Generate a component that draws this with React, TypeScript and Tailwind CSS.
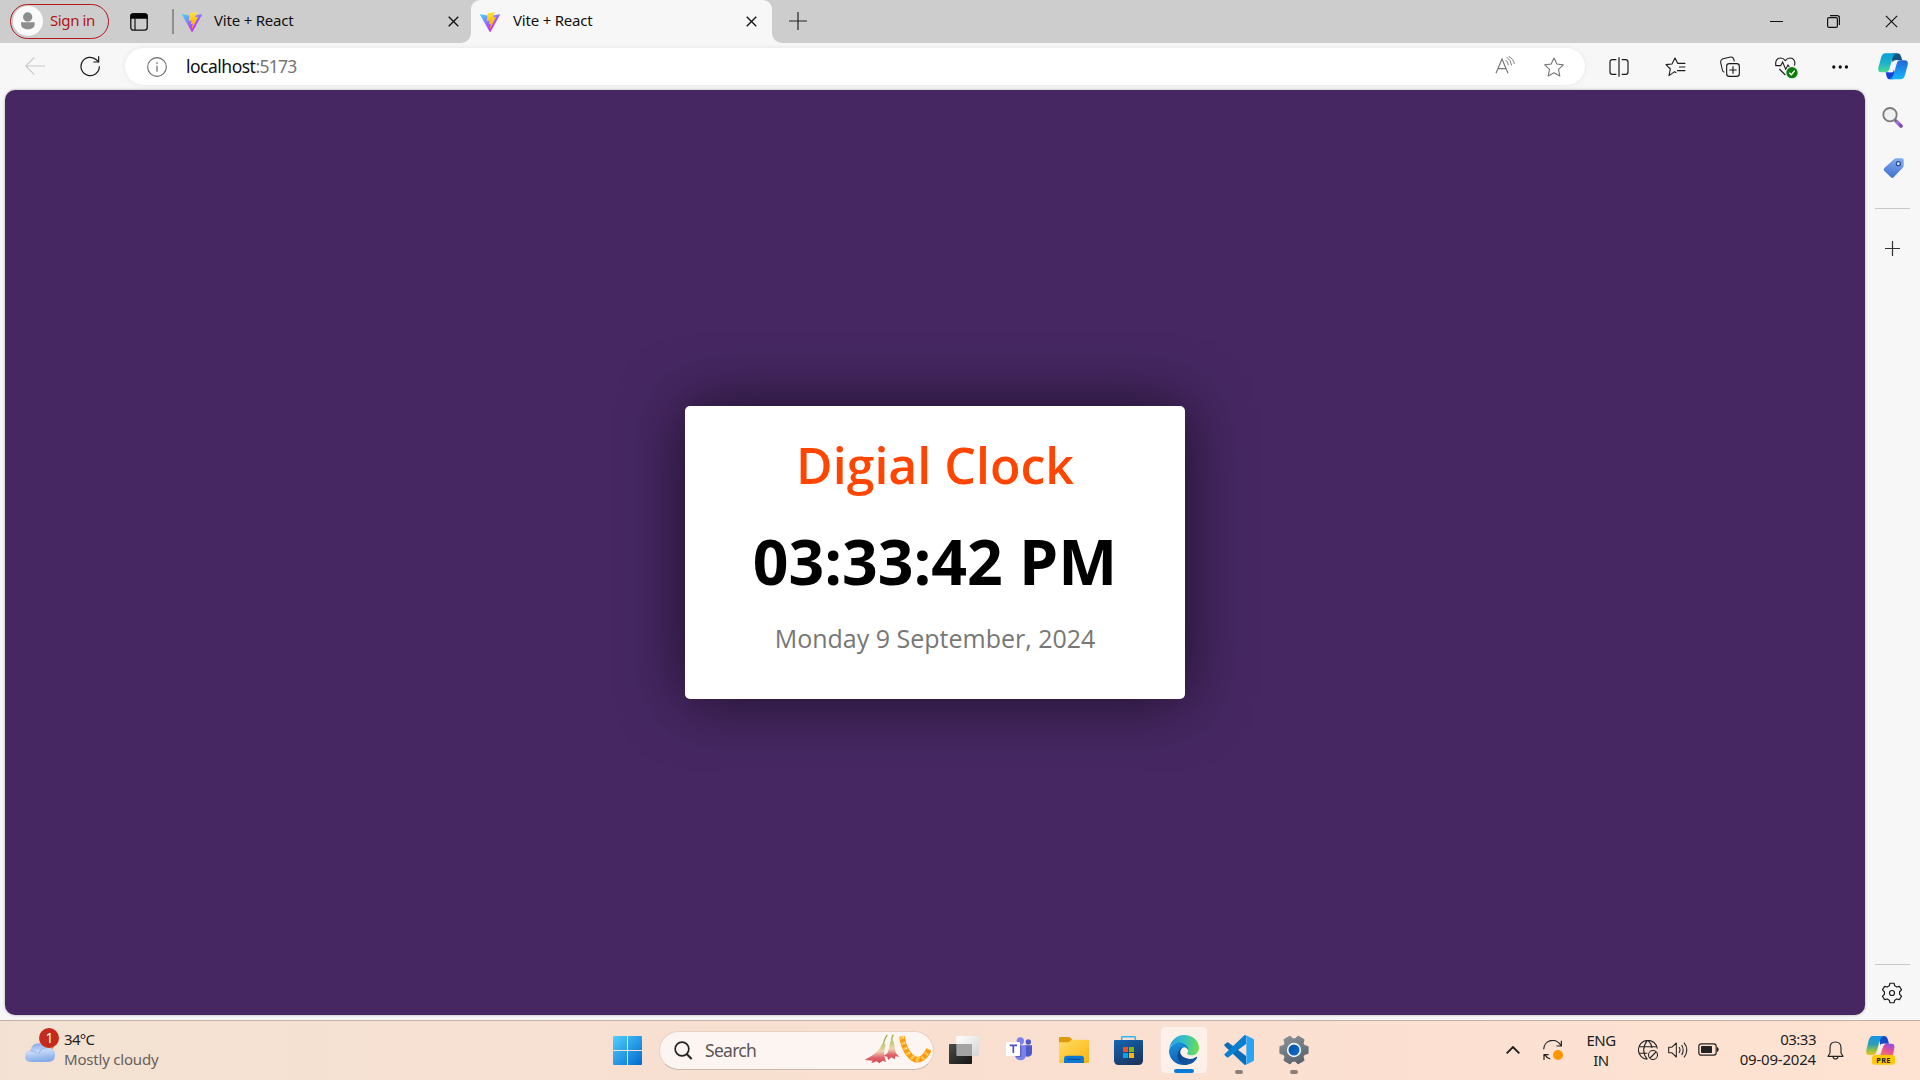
import type { ReactNode } from "react";

type IconProps = { w: number; h: number; vb: string; className?: string; children: ReactNode };

function Icon({ w, h, vb, className = "", children }: IconProps) {
  return (
    <svg width={w} height={h} viewBox={vb} fill="none" className={`block shrink-0 ${className}`}>
      {children}
    </svg>
  );
}

function gearPath(cx: number, cy: number, outer: number, inner: number, offset: number, tip: number, base: number) {
  const pts: string[] = [];
  for (let i = 0; i < 6; i++) {
    const a = offset + i * 60;
    for (const [r, d] of [[inner, -base], [outer, -tip], [outer, tip], [inner, base]]) {
      const rad = ((a + d) * Math.PI) / 180;
      pts.push(`${(cx + r * Math.cos(rad)).toFixed(1)} ${(cy + r * Math.sin(rad)).toFixed(1)}`);
    }
  }
  return `M${pts.join("L")}Z`;
}

function ViteLogo({ id }: { id: string }) {
  return (
    <Icon w={20} h={20} vb="0 0 256 257">
      <defs>
        <linearGradient id={`${id}a`} x1="-.828%" x2="57.636%" y1="7.652%" y2="78.411%">
          <stop offset="0%" stopColor="#41D1FF" />
          <stop offset="100%" stopColor="#BD34FE" />
        </linearGradient>
        <linearGradient id={`${id}b`} x1="43.376%" x2="50.316%" y1="2.242%" y2="89.03%">
          <stop offset="0%" stopColor="#FFEA83" />
          <stop offset="8.333%" stopColor="#FFDD35" />
          <stop offset="100%" stopColor="#FFA800" />
        </linearGradient>
      </defs>
      <path
        fill={`url(#${id}a)`}
        d="M255.153 37.938L134.897 252.976c-2.483 4.44-8.862 4.466-11.382.048L.875 37.958c-2.746-4.814 1.371-10.646 6.827-9.67l120.385 21.517a6.537 6.537 0 0 0 2.322-.004l117.867-21.483c5.438-.991 9.574 4.796 6.877 9.62Z"
      />
      <path
        fill={`url(#${id}b)`}
        d="M185.432.063L96.44 17.501a3.268 3.268 0 0 0-2.634 3.014l-5.474 92.456a3.268 3.268 0 0 0 3.997 3.378l24.777-5.718c2.318-.535 4.413 1.507 3.936 3.838l-7.361 36.047c-.495 2.426 1.782 4.5 4.151 3.78l15.304-4.649c2.372-.72 4.652 1.36 4.15 3.788l-11.698 56.621c-.732 3.542 3.979 5.473 5.943 2.437l1.313-2.028l72.516-144.72c1.215-2.423-.88-5.186-3.54-4.672l-25.505 4.922c-2.396.462-4.435-1.77-3.759-4.114l16.646-57.705c.677-2.35-1.37-4.583-3.769-4.113Z"
      />
    </Icon>
  );
}

function CloseX({ size, stroke, className = "" }: { size: number; stroke: number; className?: string }) {
  return (
    <Icon w={size} h={size} vb="0 0 12 12" className={className}>
      <path d="M.8 .8L11.2 11.2M11.2 .8L.8 11.2" stroke="#111" strokeWidth={stroke} />
    </Icon>
  );
}

function TabStrip() {
  return (
    <header className="flex h-[43px] shrink-0 items-center bg-[#cdcdcd] text-[15px] text-[#111]">
      <div className="mb-px ml-[10px] flex h-[35px] w-[99px] items-center rounded-full border-[1.5px] border-[#b1191d] pl-[2px]">
        <Icon w={30} h={30} vb="0 0 90 90">
          <circle cx="45" cy="45" r="45" fill="#fafafa" />
          <circle cx="44" cy="33" r="14" fill="#8e8e8e" />
          <path d="M24 49H65V54C65 65 56 70 44.500 70S24 65 24 54Z" fill="#8e8e8e" />
        </Icon>
        <span className="mb-[2px] ml-[7px] whitespace-nowrap tracking-[-0.4px] text-[#ad1518]">Sign in</span>
      </div>
      <Icon w={18} h={18} vb="0 0 18 18" className="ml-[21px]">
        <rect x=".8" y=".8" width="16.400" height="16.400" rx="2.600" stroke="#111" strokeWidth="1.300" />
        <path d="M.3 5.700V3Q.3 .3 3 .3H15Q17.700 .3 17.700 3V5.700Z" fill="#050505" />
        <path d="M5 5.500V17" stroke="#111" strokeWidth="1.200" />
      </Icon>
      <div className="ml-[24px] h-[25px] w-[2px] bg-[#8f8f8f]" />
      <div className="flex h-full w-[297px] items-center pl-[8px]">
        <ViteLogo id="t1" />
        <span className="mb-[3px] ml-[12px] w-[234px] tracking-[-0.2px]">Vite + React</span>
        <CloseX size={11} stroke={1.5} />
      </div>
      <div className="relative flex h-full w-[301px] items-center rounded-t-[9px] bg-[#f7f7f7] pl-[9px]">
        <Icon w={10} h={10} vb="0 0 10 10" className="absolute bottom-0 -left-[10px]">
          <path d="M10 0V10H0A10 10 0 0 0 10 0Z" fill="#f7f7f7" />
        </Icon>
        <Icon w={10} h={10} vb="0 0 10 10" className="absolute -right-[10px] bottom-0">
          <path d="M0 0V10H10A10 10 0 0 1 0 0Z" fill="#f7f7f7" />
        </Icon>
        <ViteLogo id="t2" />
        <span className="mb-[3px] ml-[13px] w-[233px] tracking-[-0.2px]">Vite + React</span>
        <CloseX size={11} stroke={1.5} />
      </div>
      <Icon w={18} h={18} vb="0 0 18 18" className="mb-[2px] ml-[17px]">
        <path d="M9 0V18M0 9H18" stroke="#222" strokeWidth="1.200" />
      </Icon>
      <div className="mr-[22px] ml-auto flex items-center">
        <div className="h-px w-[13px] bg-[#111]" />
        <Icon w={13} h={13} vb="0 0 13 13" className="ml-[44px]">
          <rect x=".6" y="2.600" width="9.800" height="9.800" rx="1.500" stroke="#111" strokeWidth="1.200" />
          <path d="M3 .6H10.300Q12.400 .6 12.400 2.700V10" stroke="#111" strokeWidth="1.200" />
        </Icon>
        <CloseX size={13} stroke={1.05} className="ml-[45px]" />
      </div>
    </header>
  );
}

const STAR = "M30 3L38.500 21L58 23.500L43.500 37L47.500 57L30 47.500L12.500 57L16.500 37L2 23.500L21.500 21Z";

function CopilotIcon() {
  return (
    <Icon w={30} h={27} vb="0 0 90 81">
      <defs>
        <linearGradient id="cpA" x1="0" y1="0" x2="0" y2="1">
          <stop offset="0" stopColor="#0a9fd8" />
          <stop offset=".55" stopColor="#1fb5c8" />
          <stop offset="1" stopColor="#4fd98f" />
        </linearGradient>
        <linearGradient id="cpB" x1="0" y1="0" x2="0" y2="1">
          <stop offset="0" stopColor="#2268d8" />
          <stop offset="1" stopColor="#16b4fb" />
        </linearGradient>
      </defs>
      <path d="M42 1H58Q66 1 69 10L73 22H57Q50 22 46 32L40 16Z" fill="#10547f" />
      <path d="M23 58H37Q43 58 46 47L52 64L46 79H36Q28 79 26 71Z" fill="#1442d6" />
      <path d="M22 1H56Q47 4 43 17L34 49Q31 58 22 58H10Q-2 58 1 44L9 14Q13 1 22 1Z" fill="url(#cpA)" />
      <path d="M68 22H80Q92 22 89 36L81 66Q77 79 68 79H34Q43 76 47 63L56 32Q59 22 68 22Z" fill="url(#cpB)" />
      <path d="M50 22H60Q55 25 53 32L45 58H33Q36 56 38 49L44 30Q46 23 50 22Z" fill="#f4f8fb" />
    </Icon>
  );
}

function Toolbar() {
  return (
    <div className="flex h-[47px] shrink-0 items-center bg-[#f7f7f7]">
      <Icon w={20} h={20} vb="0 0 60 60" className="mb-px ml-[25px]">
        <path d="M60 30H2M28 4L2 30L28 56" stroke="#c6c6c6" strokeWidth="3.200" />
      </Icon>
      <Icon w={21} h={21} vb="0 0 63 63" className="ml-[35px]">
        <path d="M58 31A27.500 27.500 0 1 1 50 12L56 18" stroke="#1b1b1b" strokeWidth="3.600" />
        <path d="M56 1V18H40" stroke="#1b1b1b" strokeWidth="3.600" />
      </Icon>
      <div className="ml-[24px] flex h-[37px] w-[1460px] items-center rounded-full bg-white shadow-[0_0_5px_rgba(0,0,0,0.08)]">
        <Icon w={20} h={20} vb="0 0 60 60" className="ml-[22px]">
          <circle cx="30" cy="30" r="28" stroke="#6b6b6b" strokeWidth="3.300" />
          <path d="M30 26V44" stroke="#6b6b6b" strokeWidth="3.600" />
          <circle cx="30" cy="18" r="2.600" fill="#6b6b6b" />
        </Icon>
        <div className="mb-[2px] ml-[19px] flex text-[17.5px] leading-[22px] text-[#111]">
          <span className="tracking-[-0.5px]">localhost</span>
          <span className="tracking-[-0.75px] text-[#757575]">:5173</span>
        </div>
        <Icon w={20} h={18} vb="0 0 60 54" className="mb-[3px] ml-auto">
          <path d="M3 52L21 9L39 52M9 38H33" stroke="#767676" strokeWidth="3.400" />
          <path d="M32 12Q39 17 40 28M35 3Q48 12 50 29M41 1Q56 9 58 24" stroke="#767676" strokeWidth="2.800" />
        </Icon>
        <Icon w={20} h={20} vb="0 0 60 60" className="mr-[21px] ml-[29px]">
          <path d={STAR} stroke="#767676" strokeWidth="3.300" strokeLinejoin="round" />
        </Icon>
      </div>
      <Icon w={20} h={20} vb="0 0 60 60" className="ml-[24px]">
        <path d="M22 8H10Q3 8 3 15V45Q3 52 10 52H22M38 8H50Q57 8 57 15V45Q57 52 50 52H38M30 1V59" stroke="#1b1b1b" strokeWidth="3.600" />
      </Icon>
      <Icon w={21} h={20} vb="0 0 63 60" className="ml-[36px]">
        <path
          d="M34 47L29 44L12 56L16 36L3 23L21 21L30 3L38 19H61M42 30H61M36 41H61"
          stroke="#1b1b1b"
          strokeWidth="3.300"
          strokeLinejoin="round"
        />
      </Icon>
      <Icon w={20} h={21} vb="0 0 60 63" className="ml-[34px]">
        <rect x="20" y="23" width="38" height="38" rx="8" stroke="#1b1b1b" strokeWidth="3.400" />
        <path d="M39 31V53M28 42H50" stroke="#1b1b1b" strokeWidth="3.400" />
        <path d="M13 49Q8 47 7 42L2 19Q1 11 9 8L32 3Q39 2 41 9L43 16" stroke="#1b1b1b" strokeWidth="3.200" />
      </Icon>
      <Icon w={23} h={22} vb="0 0 69 66" className="mt-[3px] ml-[35px]">
        <path d="M3 26C-1 10 8 3 17 3Q25 3 31 11Q37 3 45 3C56 3 63 13 58 26" stroke="#1b1b1b" strokeWidth="3.300" />
        <path d="M1 26H17L23 15L32 37L39 24L43 30M13 36L31 54" stroke="#1b1b1b" strokeWidth="3.300" />
        <circle cx="51" cy="47" r="17" fill="#107c10" />
        <path d="M43 47L49 53L59 41" stroke="#fff" strokeWidth="4" />
      </Icon>
      <Icon w={16} h={4} vb="0 0 16 4" className="ml-[34px]">
        <circle cx="1.800" cy="2" r="1.650" fill="#111" />
        <circle cx="8.200" cy="2" r="1.650" fill="#111" />
        <circle cx="14.400" cy="2" r="1.650" fill="#111" />
      </Icon>
      <div className="ml-[30px]">
        <CopilotIcon />
      </div>
    </div>
  );
}

function ClockCard() {
  return (
    <section className="flex h-[293px] w-[500px] flex-col items-center rounded-[5px] bg-white pt-[25px] font-['Open_Sans',sans-serif] shadow-[0_0_62.5px_rgba(0,0,0,0.6)]">
      <h1 className="h-[68px] text-[50px] leading-[68px] font-semibold text-[#ff4500]">Digial Clock</h1>
      <p className="mt-[19px] h-[85px] text-[62.5px] leading-[85px] font-bold text-black">03:33:42 PM</p>
      <p className="mt-[18px] text-[25px] leading-[34px] text-[#777777]">Monday 9 September, 2024</p>
    </section>
  );
}

function Sidebar() {
  return (
    <aside className="flex w-[55px] flex-col items-center pr-px">
      <Icon w={21} h={21} vb="0 0 63 63" className="mt-[17px]">
        <defs>
          <linearGradient id="mag" x1="0" y1="0" x2="1" y2="1">
            <stop offset="0" stopColor="#b58be6" />
            <stop offset="1" stopColor="#7a46b8" />
          </linearGradient>
        </defs>
        <path d="M40 40L57 57" stroke="url(#mag)" strokeWidth="11" strokeLinecap="round" />
        <path d="M38 38L44 44" stroke="#666" strokeWidth="6" />
        <circle cx="24" cy="23" r="20" stroke="#7c7c7c" strokeWidth="5.500" fill="#eef0f2" />
      </Icon>
      <Icon w={21} h={21} vb="0 0 63 63" className="mt-[30px] ml-[2px]">
        <defs>
          <linearGradient id="tag" x1=".6" y1="0" x2=".4" y2="1">
            <stop offset="0" stopColor="#7fabee" />
            <stop offset="1" stopColor="#4372d0" />
          </linearGradient>
        </defs>
        <path d="M33 4Q36 1 40 1H57Q62 1 62 6V22Q62 26 59 29L32 58Q28 62 24 58L4 39Q0 34 4 30Z" fill="url(#tag)" />
        <circle cx="46" cy="17" r="6" fill="#dfe9fb" stroke="#2b4a97" strokeWidth="3.600" />
      </Icon>
      <div className="mt-[29px] h-px w-[35px] bg-[#c9c9c9]" />
      <Icon w={15} h={15} vb="0 0 15 15" className="mt-[32px]">
        <path d="M7.500 0V15M0 7.500H15" stroke="#333" strokeWidth="1.200" />
      </Icon>
      <div className="mt-auto h-px w-[35px] bg-[#c9c9c9]" />
      <Icon w={22} h={22} vb="0 0 66 66" className="mt-[17px] mb-[16px]">
        <path
          d={gearPath(33, 33, 30, 23, 30, 12, 21)}
          stroke="#1b1b1b"
          strokeWidth="3.600"
          strokeLinejoin="round"
        />
        <circle cx="33" cy="33" r="7.500" stroke="#1b1b1b" strokeWidth="3.600" />
      </Icon>
    </aside>
  );
}

function SearchBox() {
  return (
    <div className="ml-[17px] flex h-[39px] w-[275px] items-center rounded-full border border-[#e6d3c6] border-b-[#c9b9ae] bg-[#fcf5f1]">
      <Icon w={19} h={19} vb="0 0 57 57" className="ml-[14px]">
        <circle cx="24" cy="24" r="20.500" stroke="#222" strokeWidth="5" />
        <path d="M38 39L53 54" stroke="#222" strokeWidth="6" />
      </Icon>
      <span className="mb-px ml-[12px] text-[17.5px] leading-[24px] tracking-[-0.7px] text-[#5a5654]">Search</span>
      <Icon w={67} h={30} vb="0 0 201 90" className="mr-[2px] mb-[4px] ml-auto">
        <defs>
          <linearGradient id="flw" x1="0" y1="0" x2="0" y2="1">
            <stop offset="0" stopColor="#b9c86a" />
            <stop offset=".4" stopColor="#f0d3b4" />
            <stop offset=".72" stopColor="#e0636b" />
            <stop offset="1" stopColor="#cf4854" />
          </linearGradient>
        </defs>
        <path d="M70 3Q64 10 61 20L57 36" stroke="#9db356" strokeWidth="4" />
        <path d="M56 28L65 32Q60 50 60 62L66 84L56 80L46 88L38 82L22 88L26 80L2 78L22 66Q44 54 56 28Z" fill="url(#flw)" />
        <path d="M88 2Q82 10 84 26" stroke="#9db356" strokeWidth="4" />
        <path d="M79 22L89 22Q92 42 95 56L106 68L94 67L92 76L82 70L72 78L70 68L58 66L70 58Q77 42 79 22Z" fill="url(#flw)" />
        <path d="M114 7Q118 40 134 60Q152 84 172 74Q186 66 195 46" stroke="#fb9a10" strokeWidth="17" />
        <path
          d="M114 7Q118 40 134 60Q152 84 172 74Q186 66 195 46"
          stroke="#ffc445"
          strokeWidth="13"
          strokeDasharray="8 9"
        />
        <path
          d="M118 7Q122 40 138 58Q154 78 170 70"
          stroke="#ffe29a"
          strokeWidth="4"
          strokeDasharray="5 12"
        />
      </Icon>
    </div>
  );
}

function EdgeLogo() {
  return (
    <Icon w={30} h={30} vb="0 0 90 90">
      <defs>
        <linearGradient id="eA" x1="0" y1=".4" x2="1" y2=".5">
          <stop offset="0" stopColor="#2a9fe0" />
          <stop offset=".5" stopColor="#35c1c4" />
          <stop offset="1" stopColor="#6ee04a" />
        </linearGradient>
        <linearGradient id="eB" x1=".3" y1="0" x2=".5" y2="1">
          <stop offset="0" stopColor="#1b93dc" />
          <stop offset="1" stopColor="#0d5cb0" />
        </linearGradient>
        <linearGradient id="eC" x1="0" y1="0" x2="1" y2=".6">
          <stop offset="0" stopColor="#0c4487" />
          <stop offset="1" stopColor="#1557a3" />
        </linearGradient>
      </defs>
      <path d="M1 40A45 45 0 0 1 45 0C72 0 90 18 90 38C90 53 79 61 67 61C57 61 53 57 56 52C60 46 57 36 48 34C30 16 8 26 1 40Z" fill="url(#eA)" />
      <path d="M0 47C4 28 22 20 37 23C51 26 59 36 58 47C55 40 50 36 45 37C34 40 30 52 33 62C37 76 52 84 66 82C60 87 52 90 45 90C20 90 0 72 0 47Z" fill="url(#eB)" />
      <path d="M43 35C34 41 31 52 37 60C46 72 68 76 81 66Q86 64 84 69C76 84 60 90 47 90C32 86 24 72 26 58C28 46 34 38 43 35Z" fill="url(#eC)" />
    </Icon>
  );
}

function CenterApps() {
  return (
    <>
      <Icon w={29} h={29} vb="0 0 87 87">
        <defs>
          <linearGradient id="win" x1="0" y1="0" x2="1" y2="1">
            <stop offset="0" stopColor="#4fd0fd" />
            <stop offset="1" stopColor="#0468cf" />
          </linearGradient>
        </defs>
        <path
          d="M3 0H42V42H0V3Q0 0 3 0ZM45 0H84Q87 0 87 3V42H45ZM0 45H42V87H3Q0 87 0 84ZM45 45H87V84Q87 87 84 87H45Z"
          fill="url(#win)"
        />
      </Icon>
      <SearchBox />
      <Icon w={30} h={28} vb="0 0 90 84" className="mb-px ml-[15px]">
        <defs>
          <linearGradient id="tvA" x1="0" y1="0" x2="1" y2="1">
            <stop offset="0" stopColor="#4a4a4a" />
            <stop offset="1" stopColor="#151515" />
          </linearGradient>
          <linearGradient id="tvB" x1="0" y1="0" x2="1" y2="1">
            <stop offset="0" stopColor="#ffffff" />
            <stop offset="1" stopColor="#d4d4d4" />
          </linearGradient>
        </defs>
        <rect x="22" y="0" width="68" height="60" rx="3" fill="url(#tvB)" />
        <rect x="0" y="24" width="69" height="60" rx="3" fill="url(#tvA)" />
        <path d="M22 24H69V60H25Q22 60 22 57Z" fill="#a3a3a3" />
      </Icon>
      <Icon w={27} h={24} vb="0 0 81 72" className="mb-[3px] ml-[27px]">
        <circle cx="43" cy="12" r="11" fill="#7b83eb" />
        <circle cx="67" cy="15" r="8" fill="#5059c9" />
        <path d="M56 25H78V46Q78 59 66 59Q60 59 56 56Z" fill="#5059c9" />
        <path d="M28 25H60V50Q60 70 43 70Q33 70 28 60Z" fill="#7b83eb" />
        <path d="M28 25H46V60H29Z" fill="#4a52b8" opacity=".65" />
        <rect x="0" y="15" width="42" height="42" rx="3" fill="#fff" />
        <path d="M11 25H33M22 25V48" stroke="#4b53bc" strokeWidth="5" />
      </Icon>
      <Icon w={30} h={28} vb="0 0 90 84" className="mb-px ml-[26px]">
        <defs>
          <linearGradient id="fol" x1="0" y1="0" x2="1" y2="1">
            <stop offset="0" stopColor="#ffdd66" />
            <stop offset="1" stopColor="#fbb40e" />
          </linearGradient>
        </defs>
        <path d="M0 6Q0 3 3 3H29Q32 3 35 6L41 13V30H0Z" fill="#dd9a09" />
        <path d="M0 19H27Q31 19 34 15Q37 11 41 11H87Q90 11 90 14V78Q90 81 87 81H3Q0 81 0 78Z" fill="url(#fol)" />
        <path d="M15 81V68Q15 59 24 59H66Q75 59 75 68V81Z" fill="#0f78d0" />
        <path d="M25 70H65" stroke="#0b4f93" strokeWidth="3.500" />
      </Icon>
      <Icon w={29} h={29} vb="0 0 87 87" className="ml-[25px]">
        <defs>
          <linearGradient id="sto" x1="0" y1="0" x2=".6" y2="1">
            <stop offset="0" stopColor="#1167b5" />
            <stop offset="1" stopColor="#1c3661" />
          </linearGradient>
        </defs>
        <path d="M23 16V5Q23 2 26 2H61Q64 2 64 5V16" stroke="#2fb8f0" strokeWidth="4.500" />
        <path d="M0 15Q0 12 3 12H84Q87 12 87 15V73Q87 87 73 87H14Q0 87 0 73Z" fill="url(#sto)" />
        <path d="M27 33H42V48H27Z" fill="#f25022" />
        <path d="M45 33H60V48H45Z" fill="#7fba00" />
        <path d="M27 51H42V66H27Z" fill="#00a4ef" />
        <path d="M45 51H60V66H45Z" fill="#ffb900" />
      </Icon>
      <div className="relative mb-px ml-[17px] flex h-[48px] w-[48px] items-center justify-center rounded-[5px] border border-[#f3e2d8] bg-[#fcf0e9] pb-px">
        <EdgeLogo />
        <div className="absolute bottom-0 left-[13px] h-[4px] w-[20px] rounded-full bg-[#0a7ad6]" />
      </div>
      <div className="relative mb-px ml-[16px] flex h-[48px] w-[30px] items-center">
        <Icon w={30} h={30} vb="0 0 90 90">
          <path d="M2 28L8 23Q11 21 14 23L66 63V88L62 90L2 33Q0 31 2 28Z" fill="#0a6db8" />
          <path d="M2 61L8 66Q11 69 14 66L66 27V2L62 0L2 57Q0 59 2 61Z" fill="#0b7fcf" />
          <path d="M62 0Q64 0 66 1L87 11Q90 12 90 16V74Q90 78 87 79L66 89Q64 90 62 90Q67 88 67 83V7Q67 2 62 0Z" fill="#29a4f5" />
        </Icon>
        <div className="absolute bottom-0 left-[11px] h-[4px] w-[8px] rounded-full bg-[#8d7f77]" />
      </div>
      <div className="relative mb-px ml-[25px] flex h-[48px] w-[30px] items-center">
        <Icon w={30} h={30} vb="0 0 90 90">
          <defs>
            <linearGradient id="setg" x1="0" y1="0" x2=".5" y2="1">
              <stop offset="0" stopColor="#8c949b" />
              <stop offset="1" stopColor="#5d666e" />
            </linearGradient>
            <linearGradient id="setb" x1="0" y1="0" x2="1" y2="1">
              <stop offset="0" stopColor="#0b4f9c" />
              <stop offset="1" stopColor="#0d6fd0" />
            </linearGradient>
          </defs>
          <path
            d={gearPath(45, 45, 43.5, 34, 0, 14, 23)}
            fill="url(#setg)"
            stroke="url(#setg)"
            strokeWidth="3"
            strokeLinejoin="round"
          />
          <circle cx="45" cy="45" r="19" fill="url(#setb)" stroke="#f4f5f6" strokeWidth="5" />
        </Icon>
        <div className="absolute bottom-0 left-[11px] h-[4px] w-[8px] rounded-full bg-[#8d7f77]" />
      </div>
    </>
  );
}

function Tray() {
  return (
    <div className="mr-[25px] ml-auto flex items-center">
      <Icon w={14} h={8} vb="0 0 14 8" className="mb-[2px]">
        <path d="M.7 7.300L7 1L13.300 7.300" stroke="#1b1b1b" strokeWidth="1.800" />
      </Icon>
      <Icon w={21} h={20} vb="0 0 63 60" className="mb-px ml-[23px]">
        <path d="M2 28A27 27 0 0 1 53 16M55 2V18H40" stroke="#222" strokeWidth="3.600" />
        <path d="M22 57A28 28 0 0 1 5 44M3 60V44H17" stroke="#222" strokeWidth="3.600" />
        <circle cx="45" cy="45" r="15" fill="#ff9500" />
      </Icon>
      <div className="mb-[2px] ml-[20px] w-[34px] text-center text-[15px] leading-[20px] tracking-[-0.5px]">
        <div>ENG</div>
        <div>IN</div>
      </div>
      <Icon w={20} h={20} vb="0 0 60 60" className="mb-px ml-[20px]">
        <path d="M58 26A28.500 28.500 0 1 0 28 58M3 20H56M3 40H28M28 1Q6 30 28 58M30 1Q40 10 42 24" stroke="#222" strokeWidth="3.200" />
        <circle cx="45" cy="45" r="13.500" stroke="#222" strokeWidth="3.200" />
        <path d="M36 54L54 36" stroke="#222" strokeWidth="3.200" />
      </Icon>
      <Icon w={20} h={18} vb="0 0 60 54" className="mb-px ml-[10px]">
        <path d="M2 19H11L25 6V48L11 35H2Z" stroke="#222" strokeWidth="3.200" strokeLinejoin="round" />
        <path d="M33 18Q39 27 33 36M41 12Q50 27 41 42M48 5Q65 27 48 49" stroke="#222" strokeWidth="3.200" />
      </Icon>
      <Icon w={21} h={13} vb="0 0 63 39" className="mb-[2px] ml-[10px]">
        <rect x="2.500" y="2.500" width="52" height="34" rx="7" stroke="#222" strokeWidth="3.600" />
        <rect x="9" y="9" width="33" height="21" rx="2" fill="#222" />
        <path d="M57 13H59Q62 16 62 19.500T59 26H57Z" fill="#222" />
      </Icon>
      <div className="mb-[3px] ml-[17px] w-[80px] text-right text-[15px] leading-[20px]">
        <div className="tracking-[-0.5px]">03:33</div>
        <div className="tracking-[-0.2px]">09-09-2024</div>
      </div>
      <Icon w={17} h={19} vb="0 0 51 57" className="mb-px ml-[11px]">
        <path d="M9 36V21Q9 3 25.500 3T42 21V36L48 46H3Z" stroke="#222" strokeWidth="3.400" strokeLinejoin="round" />
        <path d="M18 47Q19 54 25.500 54T33 47" stroke="#222" strokeWidth="3.400" />
      </Icon>
      <Icon w={29} h={29} vb="0 0 87 87" className="ml-[22px]">
        <defs>
          <linearGradient id="prA" x1="0" y1="0" x2="0" y2="1">
            <stop offset="0" stopColor="#1793e6" />
            <stop offset=".45" stopColor="#2f9fb4" />
            <stop offset=".75" stopColor="#8fc04a" />
            <stop offset="1" stopColor="#f2c11a" />
          </linearGradient>
          <linearGradient id="prB" x1=".8" y1="0" x2=".2" y2="1">
            <stop offset="0" stopColor="#8f4de8" />
            <stop offset=".5" stopColor="#e0529a" />
            <stop offset="1" stopColor="#fb7a5a" />
          </linearGradient>
        </defs>
        <path d="M38 0H54Q62 0 65 9L69 23H52Q47 24 44 32Z" fill="#1849c9" />
        <path d="M20 0H52Q44 4 40 17L32 46Q29 57 20 57H9Q-2 57 1 43L8 13Q12 0 20 0Z" fill="url(#prA)" />
        <path d="M64 23H76Q87 23 85 36L81 57H34Q42 54 45 44L51 30Q55 23 64 23Z" fill="url(#prB)" />
        <path d="M47 23H58Q53 26 51 32L43 56H31Q35 53 37 46L42 30Q44 24 47 23Z" fill="#fdeee6" />
        <rect x="18" y="57" width="69" height="29" rx="8" fill="#ffc907" />
        <text x="52.500" y="79.500" textAnchor="middle" fontSize="22" fontWeight="700" letterSpacing="1" fill="#222" fontFamily="Noto Sans, sans-serif">
          PRE
        </text>
      </Icon>
    </div>
  );
}

function Taskbar() {
  return (
    <footer className="flex h-[60px] shrink-0 items-center border-t border-[#bfb0a8] bg-linear-to-r from-[#f3e2d3] via-[#f9dfd0] to-[#fee3d3] text-[#222]">
      <div className="relative ml-[25px] flex h-[59px] w-[588px] items-start">
        <Icon w={30} h={24} vb="0 0 90 72" className="mt-[18px]">
          <defs>
            <linearGradient id="cl" x1="0" y1="0" x2=".2" y2="1">
              <stop offset="0" stopColor="#7fa3e6" />
              <stop offset=".5" stopColor="#c6d9f8" />
              <stop offset="1" stopColor="#86ace9" />
            </linearGradient>
          </defs>
          <circle cx="74" cy="22" r="12" fill="#f08a1d" />
          <path d="M18 69Q0 69 0 52Q0 37 16 35Q20 13 42 13Q56 13 64 26Q90 24 90 48Q90 69 70 69Z" fill="url(#cl)" />
          <path d="M16 35Q28 34 34 42M42 45Q46 28 64 26" stroke="#8fb0ea" strokeWidth="4" opacity=".7" />
        </Icon>
        <div className="absolute top-[7px] left-[14px] flex h-[20px] w-[20px] items-center justify-center rounded-full bg-[#c42b1c] text-[14px] leading-[20px] text-white">
          <span className="-mt-px ml-px">1</span>
        </div>
        <div className="mt-[8px] ml-[9px] text-[15px] leading-[20px]">
          <div className="tracking-[-0.7px]">34°C</div>
          <div className="tracking-[-0.2px] text-[#66605b]">Mostly cloudy</div>
        </div>
      </div>
      <CenterApps />
      <Tray />
    </footer>
  );
}

export default function App() {
  return (
    <div className="flex h-[1080px] w-[1920px] flex-col overflow-hidden bg-[#f7f7f7] font-['Noto_Sans',sans-serif]">
      <TabStrip />
      <Toolbar />
      <div className="flex h-[930px] shrink-0">
        <main className="mb-[5px] ml-[5px] flex w-[1860px] items-center justify-center rounded-[10px] bg-[#462762] shadow-[0_0_3px_rgba(0,0,0,0.3)]">
          <ClockCard />
        </main>
        <Sidebar />
      </div>
      <Taskbar />
    </div>
  );
}
